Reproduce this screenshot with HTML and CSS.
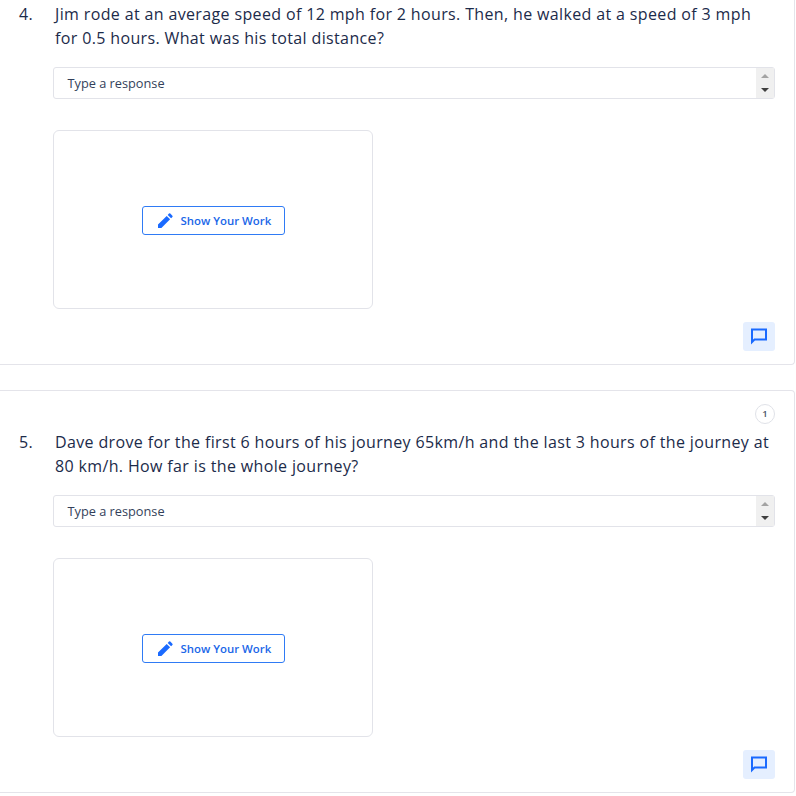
FILE: index.html
```html
<!DOCTYPE html>
<html lang="en">
<head>
    <meta charset="UTF-8">
    <meta name="viewport" content="width=device-width, initial-scale=1.0">
    <title>Questions</title>
    <link rel="stylesheet" href="styles.css">
</head>
<body>
    <div class="question first">
        <div class="prompt">
            <div class="number">4.</div>
            <div class="text">Jim rode at an average speed of 12 mph for 2 hours. Then, he walked at a speed of 3 mph for 0.5 hours. What was his total distance?</div>
        </div>
        <div class="answer">
            <div class="response">
                <div class="placeholder">Type a response</div>
                <div class="spinner">
                    <svg width="8" height="4" viewBox="0 0 8 4"><path d="M4 0L8 4H0Z" fill="#a3a3a3"/></svg>
                    <svg width="8" height="4" viewBox="0 0 8 4"><path d="M0 0H8L4 4Z" fill="#3f3f3f"/></svg>
                </div>
            </div>
            <div class="work">
                <button class="work-button">
                    <svg width="15" height="15" viewBox="0 0 15 15"><path d="M0 15V11.600L8.700 2.900L12.100 6.300L3.400 15ZM9.700 1.900L11 .6Q11.600 0 12.300 .6L14.400 2.700Q15 3.400 14.400 4L13.100 5.300Z" fill="#1a6aff"/></svg>
                    Show Your Work
                </button>
            </div>
        </div>
        <div class="actions">
            <button class="comment">
                <svg width="18" height="18" viewBox="0 0 18 18"><path d="M2 14V1.500H16V11.500H4.500L2 14Z" fill="none" stroke="#1a6aff" stroke-width="2"/></svg>
            </button>
        </div>
    </div>

    <div class="question">
        <div class="badge-row"><div class="badge">1</div></div>
        <div class="prompt">
            <div class="number">5.</div>
            <div class="text">Dave drove for the first 6 hours of his journey 65km/h and the last 3 hours of the journey at 80 km/h. How far is the whole journey?</div>
        </div>
        <div class="answer">
            <div class="response">
                <div class="placeholder">Type a response</div>
                <div class="spinner">
                    <svg width="8" height="4" viewBox="0 0 8 4"><path d="M4 0L8 4H0Z" fill="#a3a3a3"/></svg>
                    <svg width="8" height="4" viewBox="0 0 8 4"><path d="M0 0H8L4 4Z" fill="#3f3f3f"/></svg>
                </div>
            </div>
            <div class="work">
                <button class="work-button">
                    <svg width="15" height="15" viewBox="0 0 15 15"><path d="M0 15V11.600L8.700 2.900L12.100 6.300L3.400 15ZM9.700 1.900L11 .6Q11.600 0 12.300 .6L14.400 2.700Q15 3.400 14.400 4L13.100 5.300Z" fill="#1a6aff"/></svg>
                    Show Your Work
                </button>
            </div>
        </div>
        <div class="actions">
            <button class="comment">
                <svg width="18" height="18" viewBox="0 0 18 18"><path d="M2 14V1.500H16V11.500H4.500L2 14Z" fill="none" stroke="#1a6aff" stroke-width="2"/></svg>
            </button>
        </div>
    </div>
</body>
</html>
```

FILE: styles.css
```css
body {
    margin: 0;
    background: #fff;
    font-family: "Open Sans", sans-serif;
    color: #1c2b4a;
}

.question {
    width: 795px;
    box-sizing: border-box;
    padding: 13px 19px 13px 19px;
    margin-bottom: 25px;
    border: 1px solid #e4e4ea;
    border-left: none;
    border-radius: 0 4px 4px 0;
}

.question.first {
    padding-top: 2px;
    border-top: none;
    border-radius: 0 0 4px 0;
}

.badge-row {
    display: flex;
    justify-content: flex-end;
    margin-bottom: 6px;
}

.badge {
    width: 18px;
    height: 18px;
    border: 1px solid #e0e2e8;
    border-radius: 50%;
    font-size: 9.5px;
    font-weight: 600;
    line-height: 18px;
    text-align: center;
    color: #4a5568;
}

.prompt {
    display: flex;
    font-size: 16px;
    font-weight: 500;
    line-height: 24px;
    letter-spacing: 0.36px;
}

.number {
    width: 36px;
    flex-shrink: 0;
}

.text {
    flex: 1;
}

.answer {
    margin-left: 34px;
}

.response {
    display: flex;
    justify-content: space-between;
    height: 32px;
    box-sizing: border-box;
    margin-top: 17px;
    border: 1px solid #e2e3e9;
    border-radius: 3px;
}

.placeholder {
    padding-left: 13.5px;
    font-size: 12.75px;
    line-height: 30px;
    color: #333f5a;
}

.spinner {
    width: 18px;
    display: flex;
    flex-direction: column;
    align-items: center;
    justify-content: center;
    gap: 10px;
    background: #f0f0f0;
}

.work {
    width: 320px;
    height: 179px;
    box-sizing: border-box;
    padding-top: 2px;
    margin-top: 31px;
    display: flex;
    align-items: center;
    justify-content: center;
    border: 1px solid #e2e3e9;
    border-radius: 6px;
}

.work-button {
    width: 143px;
    height: 29px;
    display: flex;
    align-items: center;
    gap: 8px;
    padding: 0 0 0 15px;
    background: #fff;
    border: 1px solid #2f7bf5;
    border-radius: 3px;
    font-family: "Open Sans", sans-serif;
    font-size: 11.4px;
    font-weight: 600;
    color: #1a66e8;
}

.actions {
    display: flex;
    justify-content: flex-end;
    margin-top: 13px;
}

.comment {
    width: 32px;
    height: 29px;
    display: flex;
    align-items: center;
    justify-content: center;
    padding: 0;
    background: #e5efff;
    border: none;
    border-radius: 3px;
}
```
